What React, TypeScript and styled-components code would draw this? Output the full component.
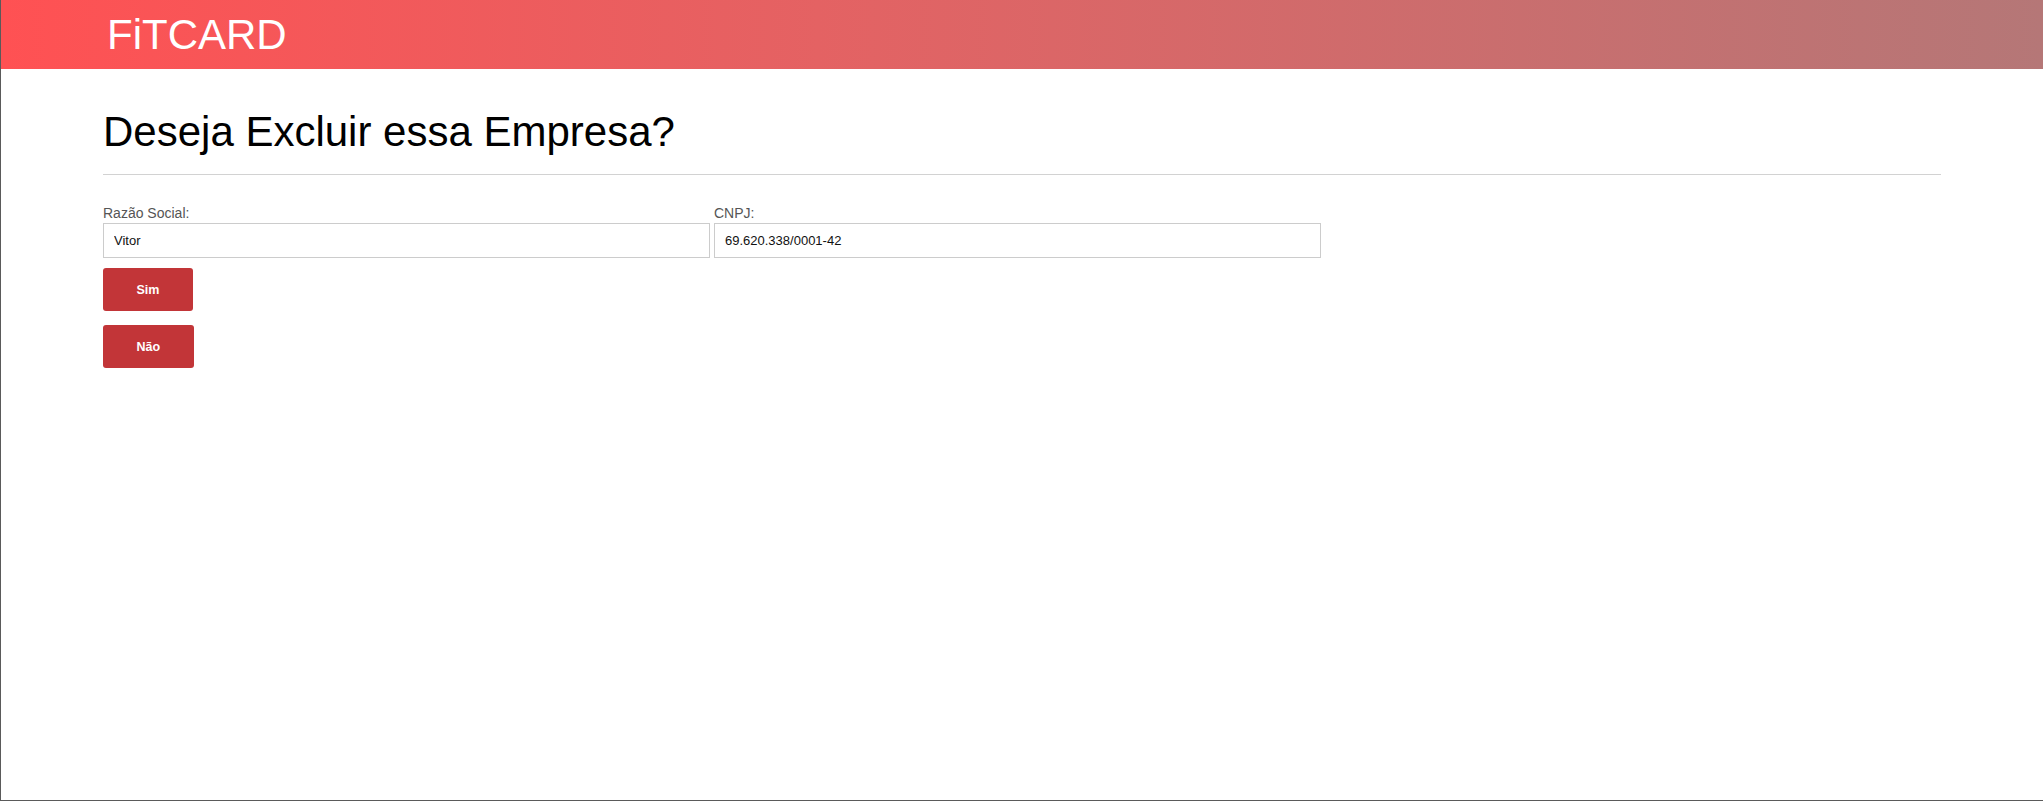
import React from "react";
import styled, { createGlobalStyle } from "styled-components";

const GlobalStyle = createGlobalStyle`
  html, body {
    margin: 0;
    padding: 0;
    background: #ffffff;
  }
  body {
    font-family: "Liberation Sans", Arial, sans-serif;
    color: #000;
  }
  * { box-sizing: border-box; }
`;

const Frame = styled.div`
  min-height: 801px;
  border-left: 1px solid #5a5a5a;
  border-bottom: 1px solid #5a5a5a;
  display: flex;
  flex-direction: column;
`;

const Header = styled.header`
  height: 69px;
  padding-left: 106px;
  background: linear-gradient(to right, #ff5153 0%, #e46263 40%, #b57777 100%);
  display: flex;
  align-items: center;
`;

const Brand = styled.div`
  color: #ffffff;
  font-size: 42px;
  line-height: 69px;
  font-family: "Liberation Sans", Arial, sans-serif;
`;

const Container = styled.main`
  padding: 0 102px;
  display: flex;
  flex-direction: column;
`;

const Title = styled.h1`
  margin: 40px 0 0;
  padding-bottom: 19px;
  border-bottom: 1px solid #d2d2d2;
  font-size: 42px;
  line-height: 46px;
  font-weight: 400;
  color: #000;
`;

const FieldsRow = styled.div`
  display: flex;
  gap: 4px;
  margin-top: 30px;
`;

const Field = styled.div`
  display: flex;
  flex-direction: column;
  width: 607px;
`;

const Label = styled.label`
  font-size: 14px;
  line-height: 16px;
  color: #555555;
  margin-bottom: 2px;
`;

const Input = styled.input`
  height: 35px;
  border: 1px solid #cccccc;
  border-radius: 0;
  padding: 0 10px;
  font-family: "Liberation Sans", Arial, sans-serif;
  font-size: 13px;
  color: #111;
  background: #fff;
  outline: none;
`;

const Actions = styled.div`
  display: flex;
  flex-direction: column;
  align-items: flex-start;
  gap: 14px;
  margin-top: 10px;
`;

const DangerButton = styled.button`
  height: 43px;
  padding: 0 33.5px;
  border: none;
  border-radius: 3px;
  background: #c23538;
  color: #ffffff;
  font-family: "Liberation Sans", Arial, sans-serif;
  font-size: 12.5px;
  font-weight: 700;
  cursor: pointer;
`;

export default function App() {
  return (
    <>
      <GlobalStyle />
      <Frame>
        <Header>
          <Brand>FiTCARD</Brand>
        </Header>
        <Container>
          <Title>Deseja Excluir essa Empresa?</Title>
          <FieldsRow>
            <Field>
              <Label>Razão Social:</Label>
              <Input readOnly value="Vitor" />
            </Field>
            <Field>
              <Label>CNPJ:</Label>
              <Input readOnly value="69.620.338/0001-42" />
            </Field>
          </FieldsRow>
          <Actions>
            <DangerButton>Sim</DangerButton>
            <DangerButton>Não</DangerButton>
          </Actions>
        </Container>
      </Frame>
    </>
  );
}
